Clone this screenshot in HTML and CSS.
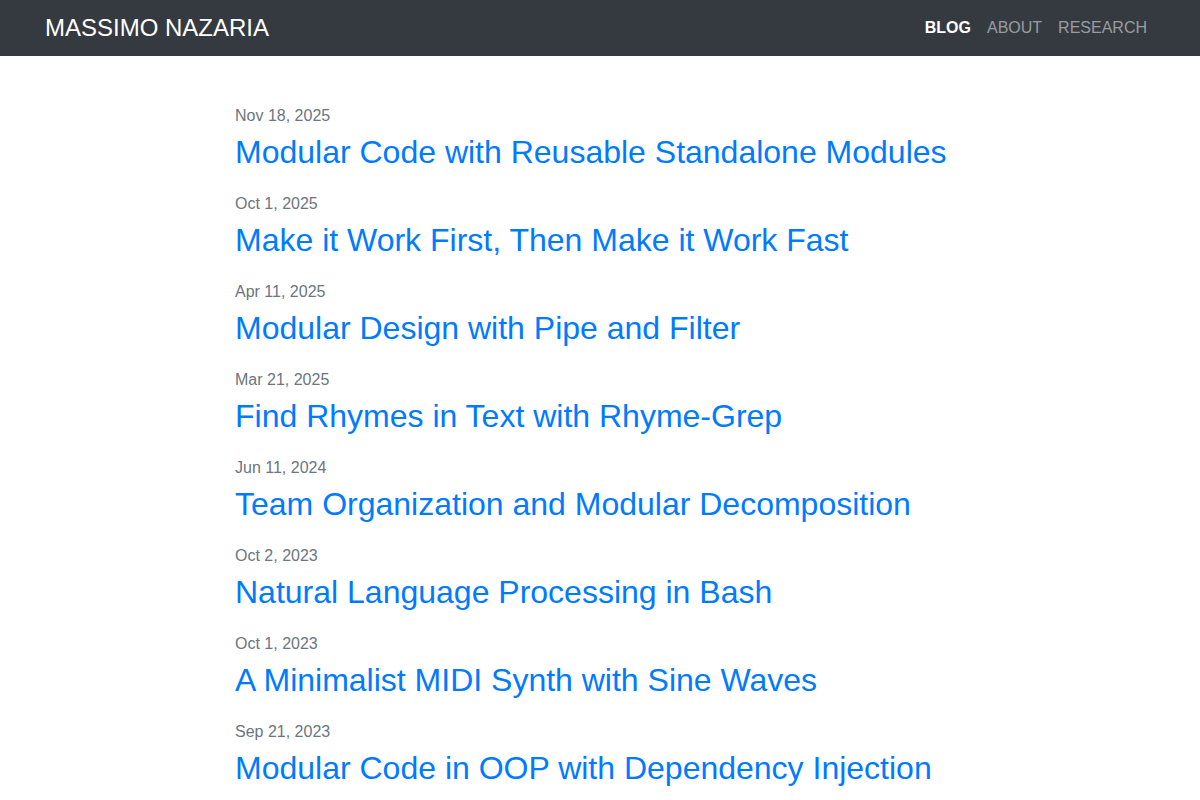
FILE: index.html
```html
<!DOCTYPE html>
<html lang="en">
<head>
    <meta charset="UTF-8" />
    <meta name="viewport" content="width=device-width, initial-scale=1.0"/>
    <title>Massimo Nazaria</title>
    <link rel="stylesheet" href="styles.css">
</head>
<body>
    <nav class="navbar">
        <div class="container nav-inner">
            <a class="brand" href="#">MASSIMO NAZARIA</a>
            <ul class="nav-links">
                <li><a class="active" href="#">BLOG</a></li>
                <li><a href="#">ABOUT</a></li>
                <li><a href="#">RESEARCH</a></li>
            </ul>
        </div>
    </nav>

    <div class="container">
        <ul class="post-list">
            <li>
                <span class="post-date">Nov 18, 2025</span>
                <h2><a href="#">Modular Code with Reusable Standalone Modules</a></h2>
            </li>
            <li>
                <span class="post-date">Oct 1, 2025</span>
                <h2><a href="#">Make it Work First, Then Make it Work Fast</a></h2>
            </li>
            <li>
                <span class="post-date">Apr 11, 2025</span>
                <h2><a href="#">Modular Design with Pipe and Filter</a></h2>
            </li>
            <li>
                <span class="post-date">Mar 21, 2025</span>
                <h2><a href="#">Find Rhymes in Text with Rhyme-Grep</a></h2>
            </li>
            <li>
                <span class="post-date">Jun 11, 2024</span>
                <h2><a href="#">Team Organization and Modular Decomposition</a></h2>
            </li>
            <li>
                <span class="post-date">Oct 2, 2023</span>
                <h2><a href="#">Natural Language Processing in Bash</a></h2>
            </li>
            <li>
                <span class="post-date">Oct 1, 2023</span>
                <h2><a href="#">A Minimalist MIDI Synth with Sine Waves</a></h2>
            </li>
            <li>
                <span class="post-date">Sep 21, 2023</span>
                <h2><a href="#">Modular Code in OOP with Dependency Injection</a></h2>
            </li>
        </ul>
    </div>
</body>
</html>
```

FILE: styles.css
```css
* {
    box-sizing: border-box;
}
body {
    margin: 0;
    font-family: "Liberation Sans", Arial, sans-serif;
    font-size: 16px;
    line-height: 1.5;
    color: #212529;
    background-color: #fff;
}
a {
    text-decoration: none;
}
.container {
    max-width: 1140px;
    margin: 0 auto;
    padding: 0 15px;
}
.navbar {
    background-color: #343a40;
    height: 56px;
}
.nav-inner {
    display: flex;
    align-items: center;
    justify-content: space-between;
    height: 100%;
}
.brand {
    color: #fff;
    font-size: 24px;
    line-height: 1;
}
.nav-links {
    display: flex;
    list-style: none;
    margin: 0;
    padding: 0;
}
.nav-links a {
    display: block;
    padding: 8px 8px;
    color: rgba(255, 255, 255, 0.5);
}
.nav-links a.active {
    color: #fff;
    font-weight: bold;
}
.post-list {
    list-style: none;
    margin: 48px 0 0;
    padding: 0 0 0 190px;
    width: 920px;
}
.post-list li {
    margin-bottom: 20.6px;
}
.post-date {
    display: block;
    margin-bottom: 5px;
    color: #6c757d;
}
.post-list h2 {
    margin: 0;
    font-size: 32px;
    font-weight: normal;
    line-height: 1.2;
}
.post-list h2 a {
    color: #007bff;
}
```
